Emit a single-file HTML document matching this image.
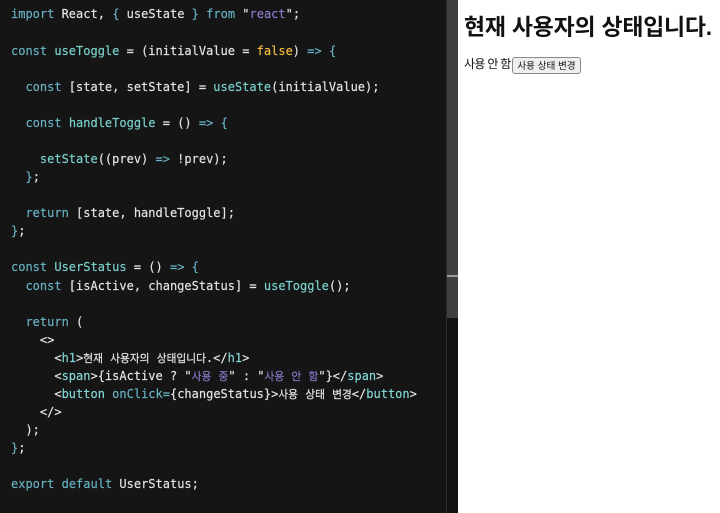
<!DOCTYPE html>
<html lang="ko">
<head>
<meta charset="utf-8">
<style>
html,body{margin:0;padding:0;width:720px;height:513px;overflow:hidden;background:#fff}
#ed{position:absolute;left:0;top:0;width:447px;height:513px;background:#151515;overflow:hidden}
#code{position:absolute;left:11px;top:5.4px;margin:0;font:12px/18.08px "DejaVu Sans Mono","Liberation Mono",monospace;color:#e6e6e6;white-space:pre;-webkit-text-stroke:.15px currentColor}
.c{color:#68b2c4}
.f{color:#7ad2cd}
.s{color:#9079cc}
.y{color:#f5bd3e}
.g{color:#85d8d8}
.k{font-family:"Noto Sans CJK KR",sans-serif;font-size:10.7px;line-height:0}
#track{position:absolute;left:446px;top:0;width:12px;height:513px;background:#121212;border-left:1px solid #2c2c2c;box-sizing:border-box}
#thumb{position:absolute;left:447px;top:0;width:11px;height:318px;background:#404040}
#mark{position:absolute;left:447px;top:275px;width:11px;height:2px;background:#9a9a9a}
#h{position:absolute;left:464px;top:12px;margin:0;font:bold 22.9px/30px "Liberation Sans","Noto Sans CJK KR",sans-serif;color:#111;white-space:nowrap;letter-spacing:-.2px}
#t{position:absolute;left:464px;top:55px;font:12px/18px "Liberation Sans","Noto Sans CJK KR",sans-serif;color:#111;white-space:nowrap;letter-spacing:-.7px}
#b{position:absolute;left:512px;top:57px;width:69px;height:17px;box-sizing:border-box;padding:2px 0 0;background:#efefef;border:1px solid #8a8a8a;border-radius:3px;font:9.6px/13px "Liberation Sans","Noto Sans CJK KR",sans-serif;color:#111;text-align:center}
</style>
</head>
<body>
<div id="ed"><pre id="code"><span class="c">import</span> React<span>,</span> <span class="c">{</span> useState <span class="c">}</span> <span class="c">from</span> "<span class="s">react</span>";

<span class="c">const</span> <span class="f">useToggle</span> = (initialValue = <span class="y">false</span>) <span class="c">=&gt;</span> <span class="c">{</span>

  <span class="c">const</span> [state, setState] = <span class="f">useState</span>(initialValue);

  <span class="c">const</span> <span class="f">handleToggle</span> = () <span class="c">=&gt;</span> <span class="c">{</span>

    <span class="f">setState</span>((prev) <span class="c">=&gt;</span> !prev);
  <span class="c">}</span>;

  <span class="c">return</span> [state, handleToggle];
<span class="c">}</span>;

<span class="c">const</span> <span class="f">UserStatus</span> = () <span class="c">=&gt;</span> <span class="c">{</span>
  <span class="c">const</span> [isActive, changeStatus] = <span class="f">useToggle</span>();

  <span class="c">return</span> (
    &lt;&gt;
      &lt;<span class="g">h1</span>&gt;<span class="k">현재</span> <span class="k">사용자의</span> <span class="k">상태입니다</span>.&lt;/<span class="g">h1</span>&gt;
      &lt;<span class="g">span</span>&gt;{isActive ? "<span class="s k">사용</span> <span class="s k">중</span>" : "<span class="s k">사용</span> <span class="s k">안</span> <span class="s k">함</span>"}&lt;/<span class="g">span</span>&gt;
      &lt;<span class="g">button</span> <span class="c">onClick=</span>{changeStatus}&gt;<span class="k">사용</span> <span class="k">상태</span> <span class="k">변경</span>&lt;/<span class="g">button</span>&gt;
    &lt;/&gt;
  );
<span class="c">}</span>;

<span class="c">export</span> <span class="c">default</span> UserStatus;</pre></div>
<div id="track"></div>
<div id="thumb"></div>
<div id="mark"></div>
<h1 id="h">현재 사용자의 상태입니다.</h1>
<span id="t">사용 안 함</span>
<button id="b">사용 상태 변경</button>
</body>
</html>
